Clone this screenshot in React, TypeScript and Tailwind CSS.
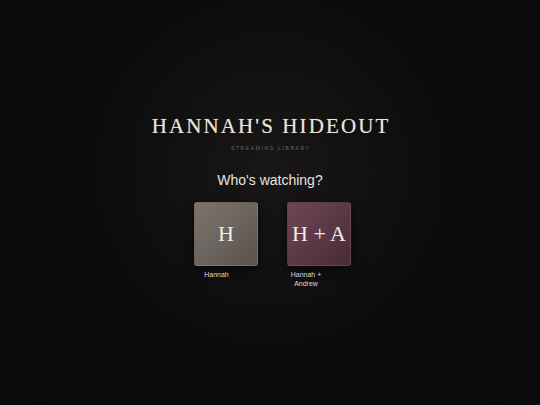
import React from "react";

type Profile = {
  id: string;
  name: string;
  initials: string;
  tile: string;
  label: string;
};

const profiles: Profile[] = [
  {
    id: "hannah",
    name: "Hannah",
    initials: "H",
    tile: "bg-[linear-gradient(135deg,#7d746d_0%,#6a625c_55%,#5a524d_100%)]",
    label: "w-[45px]",
  },
  {
    id: "hannah-andrew",
    name: "Hannah + Andrew",
    initials: "H + A",
    tile: "bg-[linear-gradient(135deg,#6e4656_0%,#5a3745_55%,#482a37_100%)]",
    label: "w-[38px]",
  },
];

export default function App() {
  return (
    <div className="min-h-screen w-full bg-[#0a0a0a] bg-[radial-gradient(circle_at_50%_42%,#181616_0%,#121111_28%,#0b0b0b_52%,#0a0a0a_100%)] font-['Liberation_Sans',Arial,sans-serif]">
      <div className="flex flex-col items-center pt-[116px]">
        <h1 className="pl-[2.1px] font-['Liberation_Serif','Times_New_Roman',serif] text-[21px] leading-none tracking-[2.1px] text-[#ebe4da] [text-shadow:0_0_1px_rgba(235,228,218,0.5),0_1px_2px_rgba(0,0,0,0.8)]">
          HANNAH'S HIDEOUT
        </h1>
        <div className="mt-[9px] pl-[1.6px] text-[5px] leading-none tracking-[1.6px] text-[#6e6a66]">
          STREAMING LIBRARY
        </div>

        <h2 className="mt-[22px] text-[14px] leading-none text-[#e6e3df]">Who's watching?</h2>

        <div className="mt-[15px] flex gap-[29px] pl-[5px]">
          {profiles.map((p) => (
            <button key={p.id} className="flex w-[64px] flex-col items-start">
              <div
                className={`flex h-[64px] w-[64px] items-center justify-center rounded-[3px] border border-white/5 shadow-[0_4px_12px_rgba(0,0,0,0.6)] ${p.tile}`}
              >
                <span className="font-['Liberation_Serif','Times_New_Roman',serif] text-[22px] leading-none text-[#f1ece6]">
                  {p.initials}
                </span>
              </div>
              <div className={`mt-[4px] text-center text-[7px] leading-[9px] text-[#dedad6] ${p.label}`}>
                {p.name}
              </div>
            </button>
          ))}
        </div>
      </div>
    </div>
  );
}
